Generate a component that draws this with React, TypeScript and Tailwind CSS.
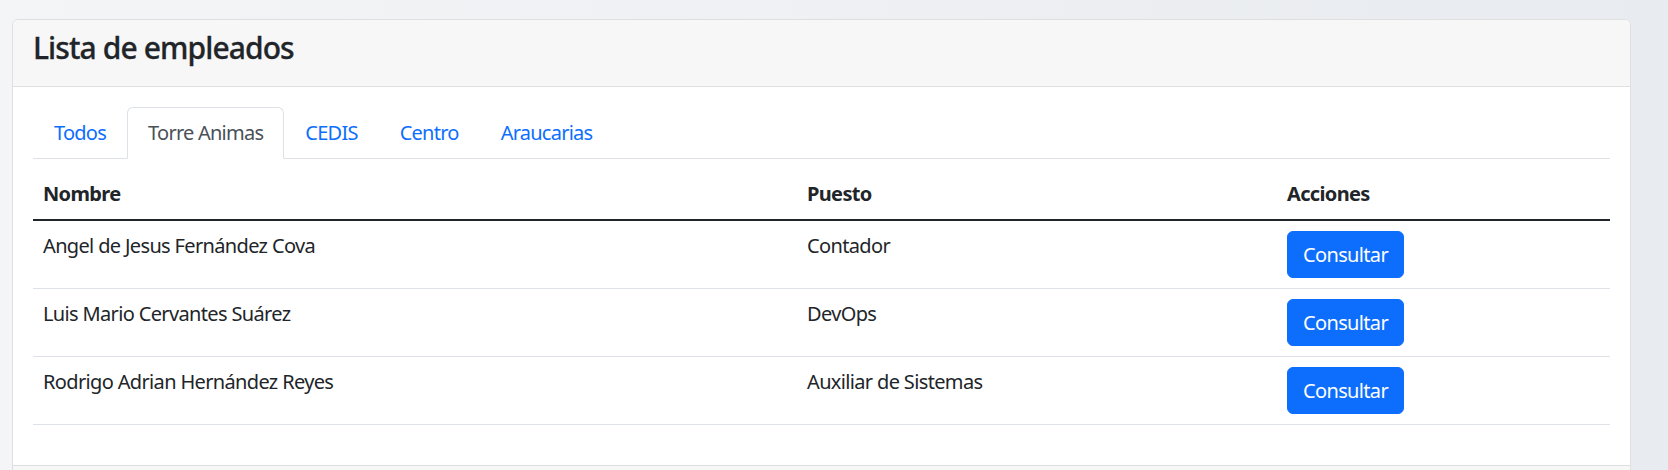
import React from "react";

const tabs = ["Todos", "Torre Animas", "CEDIS", "Centro", "Araucarias"];
const rows = [
  { nombre: "Angel de Jesus Fernández Cova", puesto: "Contador" },
  { nombre: "Luis Mario Cervantes Suárez", puesto: "DevOps" },
  { nombre: "Rodrigo Adrian Hernández Reyes", puesto: "Auxiliar de Sistemas" },
];

export default function App() {
  return (
    <div
      className="min-h-[470px] w-full bg-gradient-to-r from-[#f4f5f7] to-[#e8ebef] pt-[19px] pl-[12px] pr-[37px] text-[#212529] tracking-[-0.65px]"
      style={{ fontFamily: '"Noto Sans", "Open Sans", sans-serif' }}
    >
      <div className="overflow-hidden rounded-[6px] border border-[#dfdfdf] bg-white">
        <div className="border-b border-[#dfdfdf] bg-[#f7f7f7] px-5 py-[10px]">
          <h4 className="mb-[10px] text-[30px] font-medium leading-[36px] tracking-[-0.9px] [-webkit-text-stroke:0.3px_#212529]">
            Lista de empleados
          </h4>
        </div>
        <div className="p-5">
          <div className="flex border-b border-[#dee2e6]">
            {tabs.map((t, i) => (
              <div
                key={t}
                className={
                  i === 1
                    ? "-mb-px rounded-t-[6px] border border-[#dee2e6] border-b-white bg-white px-5 py-[10px] text-[20px] leading-[30px] tracking-[-0.75px] text-[#495057]"
                    : "-mb-px rounded-t-[6px] border border-transparent px-5 py-[10px] text-[20px] leading-[30px] tracking-[-0.75px] text-[#0d6efd]"
                }
              >
                {t}
              </div>
            ))}
          </div>
          <table className="mt-[10px] mb-5 w-full table-fixed border-collapse text-[20px] leading-[30px]">
            <colgroup>
              <col className="w-[764px]" />
              <col className="w-[480px]" />
              <col />
            </colgroup>
            <thead>
              <tr className="border-b-2 border-[#212529]">
                <th className="p-[10px] text-left font-bold">Nombre</th>
                <th className="p-[10px] text-left font-bold">Puesto</th>
                <th className="p-[10px] text-left font-bold">Acciones</th>
              </tr>
            </thead>
            <tbody>
              {rows.map((r) => (
                <tr key={r.nombre} className="border-b border-[#dee2e6]">
                  <td className="p-[10px] align-top">{r.nombre}</td>
                  <td className="p-[10px] align-top">{r.puesto}</td>
                  <td className="p-[10px] align-top">
                    <button className="h-[47px] rounded-[6px] border border-[#0d6efd] bg-[#0d6efd] px-[15px] text-[20px] leading-[30px] text-white">
                      Consultar
                    </button>
                  </td>
                </tr>
              ))}
            </tbody>
          </table>
        </div>
        <div className="h-[20px] border-t border-[#dfdfdf] bg-[#f7f7f7]" />
      </div>
    </div>
  );
}
